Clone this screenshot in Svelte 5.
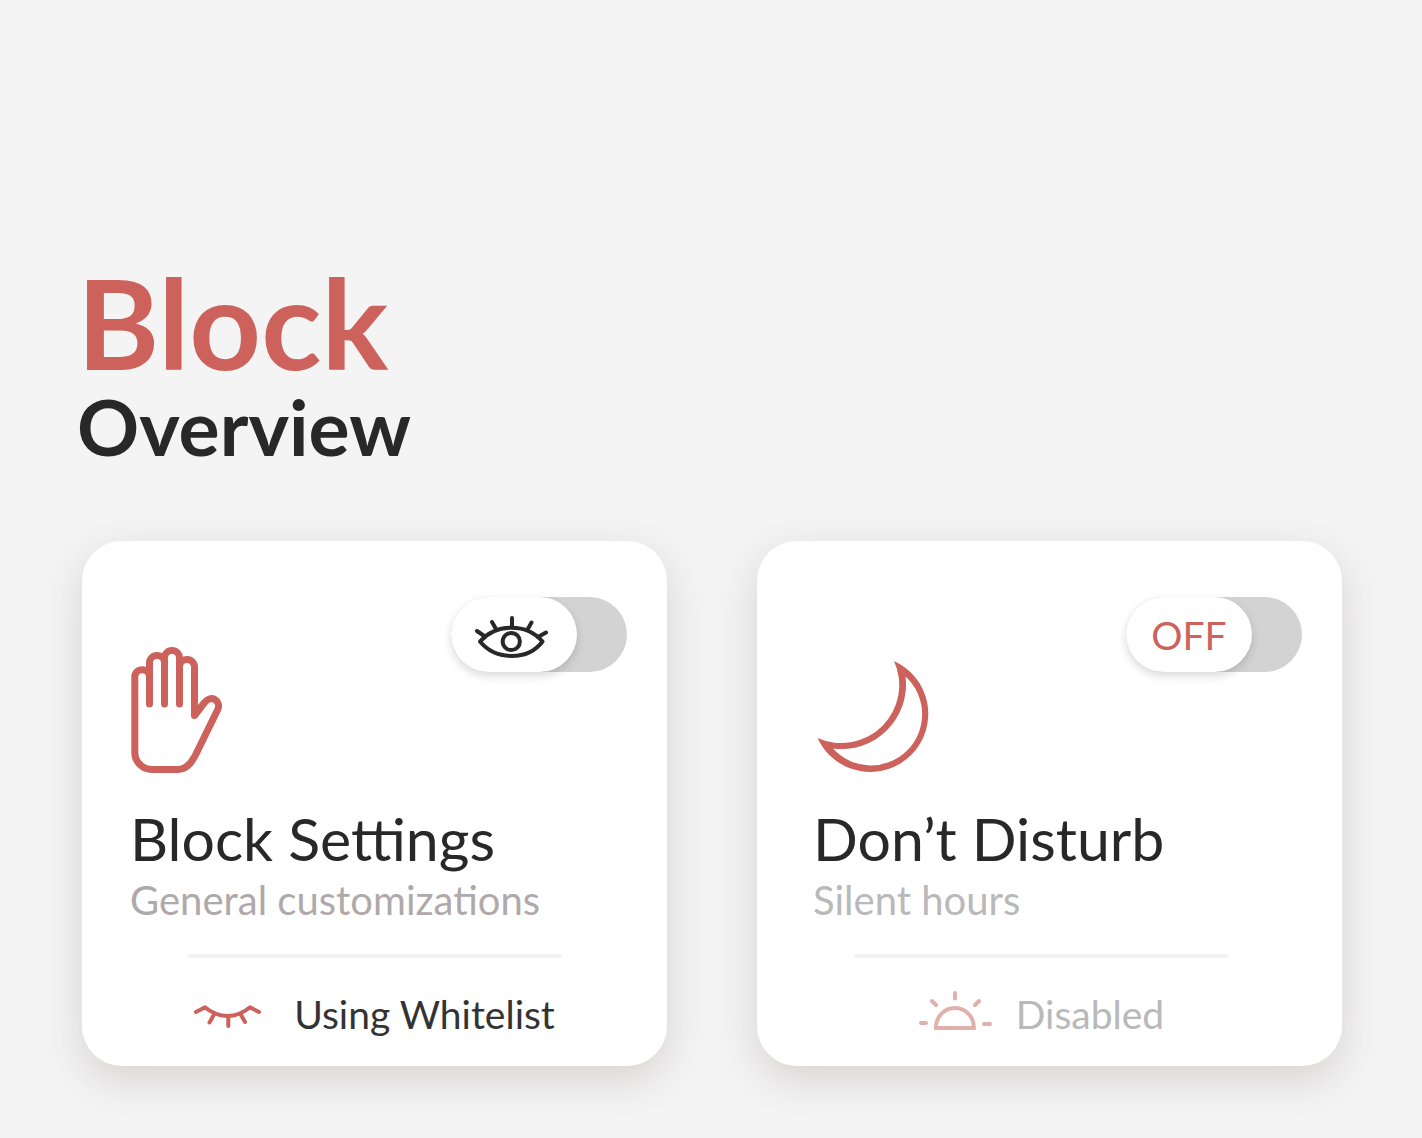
<script lang="ts">
	type Card = {
		id: string;
		title: string;
		subtitle: string;
		status: string;
		icon: 'hand' | 'moon';
		active: boolean;
	};

	let cards = $state<Card[]>([
		{
			id: 'settings',
			title: 'Block Settings',
			subtitle: 'General customizations',
			status: 'Using Whitelist',
			icon: 'hand',
			active: true
		},
		{
			id: 'disturb',
			title: 'Don’t Disturb',
			subtitle: 'Silent hours',
			status: 'Disabled',
			icon: 'moon',
			active: false
		}
	]);
</script>

<svelte:head>
	<title>Block Overview</title>
</svelte:head>

<main class="page">
	<header>
		<h1>Block</h1>
		<p class="tagline">Overview</p>
	</header>

	<div class="cards">
		{#each cards as card (card.id)}
			<section class="card {card.id}">
				<div class="top">
					{#if card.icon === 'hand'}
						<svg class="icon" width="94" height="128" viewBox="20 16 94 128" aria-hidden="true">
							<g fill="none" stroke="currentColor" stroke-width="7" stroke-linecap="round" stroke-linejoin="round">
								<path d="M39.5 74V33a7.5 7.5 0 0 1 15 0V74" />
								<path d="M54.5 33V28a7.5 7.5 0 0 1 15 0V74" />
								<path
									d="M69.5 37a7.5 7.5 0 0 1 15 0V85.5L94.5 72.5C101 64 111 71 108 79L86 124C81 134 76 139.5 68 139.5H42A17.2 17 0 0 1 24.8 122.5V47a7.35 7.35 0 0 1 14.7 0"
								/>
							</g>
						</svg>
					{:else}
						<svg class="icon" width="117" height="128" viewBox="13 6 117 128" aria-hidden="true">
							<path
								fill="currentColor"
								fill-rule="evenodd"
								d="M94 21A58 58 0 1 1 17.5 98A58 58 0 0 0 94 21ZM105.5 36.5A64.5 64.5 0 0 1 33 108.5A51.15 51.15 0 1 0 105.5 36.5Z"
							/>
						</svg>
					{/if}

					<label class="toggle">
						<input type="checkbox" role="switch" aria-label={card.title} bind:checked={card.active} />
						<span class="knob">
							{#if card.active}
								<svg width="80" height="50" viewBox="44 30 80 50" aria-hidden="true">
									<g fill="none" stroke="currentColor" stroke-width="4" stroke-linecap="round" stroke-linejoin="round">
										<path d="M50 61.5C66 43 97 43 112.5 61.5C98 80.8 66 80.8 50 61.5Z" />
										<circle cx="81.3" cy="61.5" r="8.6" />
										<path d="M47 51L55 56.5M62 42L66 49M82 38V47M101.5 42.5L97.5 49.5M116 52.5L108 57" />
									</g>
								</svg>
							{:else}
								OFF
							{/if}
						</span>
					</label>
				</div>

				<div class="text">
					<h2>{card.title}</h2>
					<p>{card.subtitle}</p>
				</div>

				<footer>
					<hr />
					<div class="status">
						{#if card.icon === 'hand'}
							<svg width="68" height="44" viewBox="16 12 68 44" aria-hidden="true">
								<g fill="none" stroke="currentColor" stroke-width="4" stroke-linecap="round" stroke-linejoin="round">
									<path d="M18 32L27 27.3C41 39 58 39 72 27.3L81 32" />
									<path d="M36 34.5L31.5 42.5M50.3 36.5V46M62.5 34L67 42" />
								</g>
							</svg>
						{:else}
							<svg width="73" height="48" viewBox="17 9 73 48" aria-hidden="true">
								<g fill="none" stroke="currentColor" stroke-width="4">
									<path d="M34 47V46a18.9 19 0 0 1 37.8 0v1Z" />
									<path
										stroke-linecap="round"
										d="M53 12V17.5M30 20L34 24M77 20L73 24M19 42H24M82 43H88"
									/>
								</g>
							</svg>
						{/if}
						<span>{card.status}</span>
					</div>
				</footer>
			</section>
		{/each}
	</div>
</main>

<style>
	:global(body) {
		margin: 0;
		background: #f4f4f4;
	}

	.page {
		--red: #cc625b;
		--dark: #282828;
		--inset: 48px;
		box-sizing: border-box;
		min-height: 100vh;
		padding: 259px 80px 72px 82px;
		font-family: Lato, 'Open Sans', sans-serif;
		color: var(--dark);
	}

	h1,
	h2,
	p {
		margin: 0;
	}

	/* pulls the large glyphs back onto the edge of the cards */
	header {
		margin-left: -5px;
	}

	h1 {
		font-size: 125px;
		line-height: 126px;
		font-weight: 700;
		color: var(--red);
	}

	.tagline {
		font-size: 77px;
		line-height: 82px;
		font-weight: 700;
	}

	.cards {
		display: grid;
		grid-template-columns: 1fr 1fr;
		gap: 90px;
		margin-top: 74px;
	}

	.card {
		padding: 56px 0 28px;
		border-radius: 40px;
		background: #fff;
		box-shadow: 0 14px 40px rgb(90 60 60 / 0.18);
	}

	.disturb {
		--inset: 56px;
	}

	.top {
		display: flex;
		justify-content: space-between;
		align-items: flex-start;
		padding: 0 40px 0 var(--inset);
	}

	.icon {
		margin-top: 49px;
		color: var(--red);
	}

	.toggle {
		position: relative;
		display: flex;
		width: 176px;
		height: 75px;
		border-radius: 38px;
		background: #d3d3d3;
		cursor: pointer;
	}

	.toggle input {
		position: absolute;
		inset: 0;
		width: 100%;
		height: 100%;
		margin: 0;
		opacity: 0;
		cursor: pointer;
	}

	.knob {
		display: flex;
		align-items: center;
		justify-content: center;
		width: 126px;
		border-radius: 38px;
		background: #fff;
		box-shadow: 0 4px 10px rgb(0 0 0 / 0.15);
		font-size: 39px;
	}

	.disturb .knob {
		color: var(--red);
	}

	.text {
		margin-top: 28px;
		padding-left: var(--inset);
	}

	h2 {
		font-size: 59px;
		line-height: 74px;
		font-weight: 400;
	}

	.text p {
		font-size: 40px;
		line-height: 48px;
		color: #b0a9a9;
	}

	.disturb .text p {
		color: #b9b9b9;
	}

	footer {
		padding-top: 30px;
	}

	.disturb footer {
		padding-right: 16px;
	}

	hr {
		width: 375px;
		max-width: 80%;
		height: 4px;
		margin: 0 auto;
		border: 0;
		border-radius: 2px;
		background: #f3f2f3;
	}

	.status {
		display: flex;
		align-items: center;
		justify-content: center;
		gap: 32px;
		margin-top: 32px;
		font-size: 39px;
		line-height: 48px;
		color: #333;
	}

	.status svg {
		color: var(--red);
	}

	.disturb .status {
		gap: 24px;
		color: #b9b9b9;
	}

	.disturb .status svg {
		color: #e0b0ac;
	}

	@media (max-width: 1260px) {
		.cards {
			grid-template-columns: 1fr;
		}
	}
</style>
